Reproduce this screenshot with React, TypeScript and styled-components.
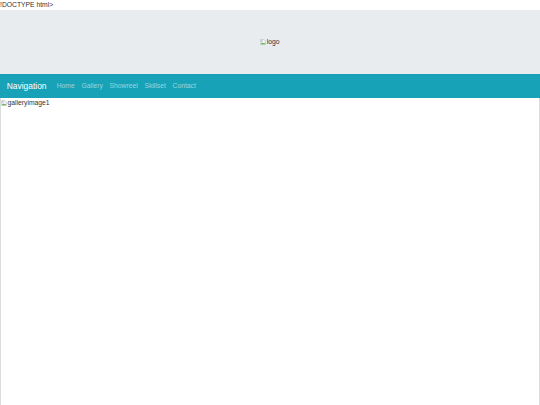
import styled, { createGlobalStyle } from "styled-components";

const GlobalStyle = createGlobalStyle`
  html, body {
    margin: 0;
    padding: 0;
    background: #ffffff;
  }
  body {
    font-family: "Liberation Sans", Arial, sans-serif;
    font-size: 6.75px;
    line-height: 1.5;
    color: #333333;
    overflow: hidden;
  }
`;

function BrokenIcon() {
  return (
    <St.Icon viewBox="0 0 16 16" aria-hidden="true">
      <path d="M1.5 1.5h9l4 4v9h-13z" fill="#f4f4f4" stroke="#9a9a9a" strokeWidth="1" />
      <path d="M2 14l4-5 3 3 2-2 3 4z" fill="#4caf50" />
      <circle cx="5" cy="5" r="1.6" fill="#5b9bd5" />
    </St.Icon>
  );
}

const links = ["Home", "Gallery", "Showreel", "Skillset", "Contact"];

export default function App() {
  return (
    <St.Page>
      <GlobalStyle />
      <St.Doctype>!DOCTYPE html&gt;</St.Doctype>
      <St.Header>
        <St.AltImage>
          <BrokenIcon />
          <span>logo</span>
        </St.AltImage>
      </St.Header>
      <St.Navbar>
        <St.Brand>Navigation</St.Brand>
        <St.NavList>
          {links.map((link) => (
            <St.NavLink key={link}>{link}</St.NavLink>
          ))}
        </St.NavList>
      </St.Navbar>
      <St.Gallery>
        <St.AltImage>
          <BrokenIcon />
          <span>galleryimage1</span>
        </St.AltImage>
      </St.Gallery>
    </St.Page>
  );
}

const St = {
  Page: styled.div`
    height: 100vh;
    overflow: hidden;
  `,
  Doctype: styled.div`
    height: 10px;
    line-height: 10px;
    font-size: 6.75px;
    color: #333333;
  `,
  Header: styled.header`
    height: 64px;
    background-color: #e9ecef;

    display: flex;
    align-items: center;
    justify-content: center;
  `,
  AltImage: styled.span`
    display: inline-flex;
    align-items: center;
    gap: 0.5px;
    font-size: 6.75px;
    line-height: 8px;
    color: #333333;
  `,
  Icon: styled.svg`
    width: 6px;
    height: 6px;
    flex-shrink: 0;
  `,
  Navbar: styled.nav`
    height: 24px;
    padding: 0 6.75px;
    background-color: #17a2b8;
    box-sizing: border-box;

    display: flex;
    align-items: center;
  `,
  Brand: styled.span`
    margin-right: 6.75px;
    font-size: 8.44px;
    line-height: 1;
    color: #ffffff;
  `,
  NavList: styled.ul`
    margin: 0;
    padding: 0;
    list-style: none;
    display: flex;
  `,
  NavLink: styled.li`
    padding: 0 3.375px;
    font-size: 6.75px;
    color: rgba(255, 255, 255, 0.55);
  `,
  Gallery: styled.div`
    height: 600px;
    border-left: 1px solid #dcdcdc;
    border-right: 1px solid #dcdcdc;
    box-sizing: border-box;
    padding: 1px 0 0 0;
  `,
};
